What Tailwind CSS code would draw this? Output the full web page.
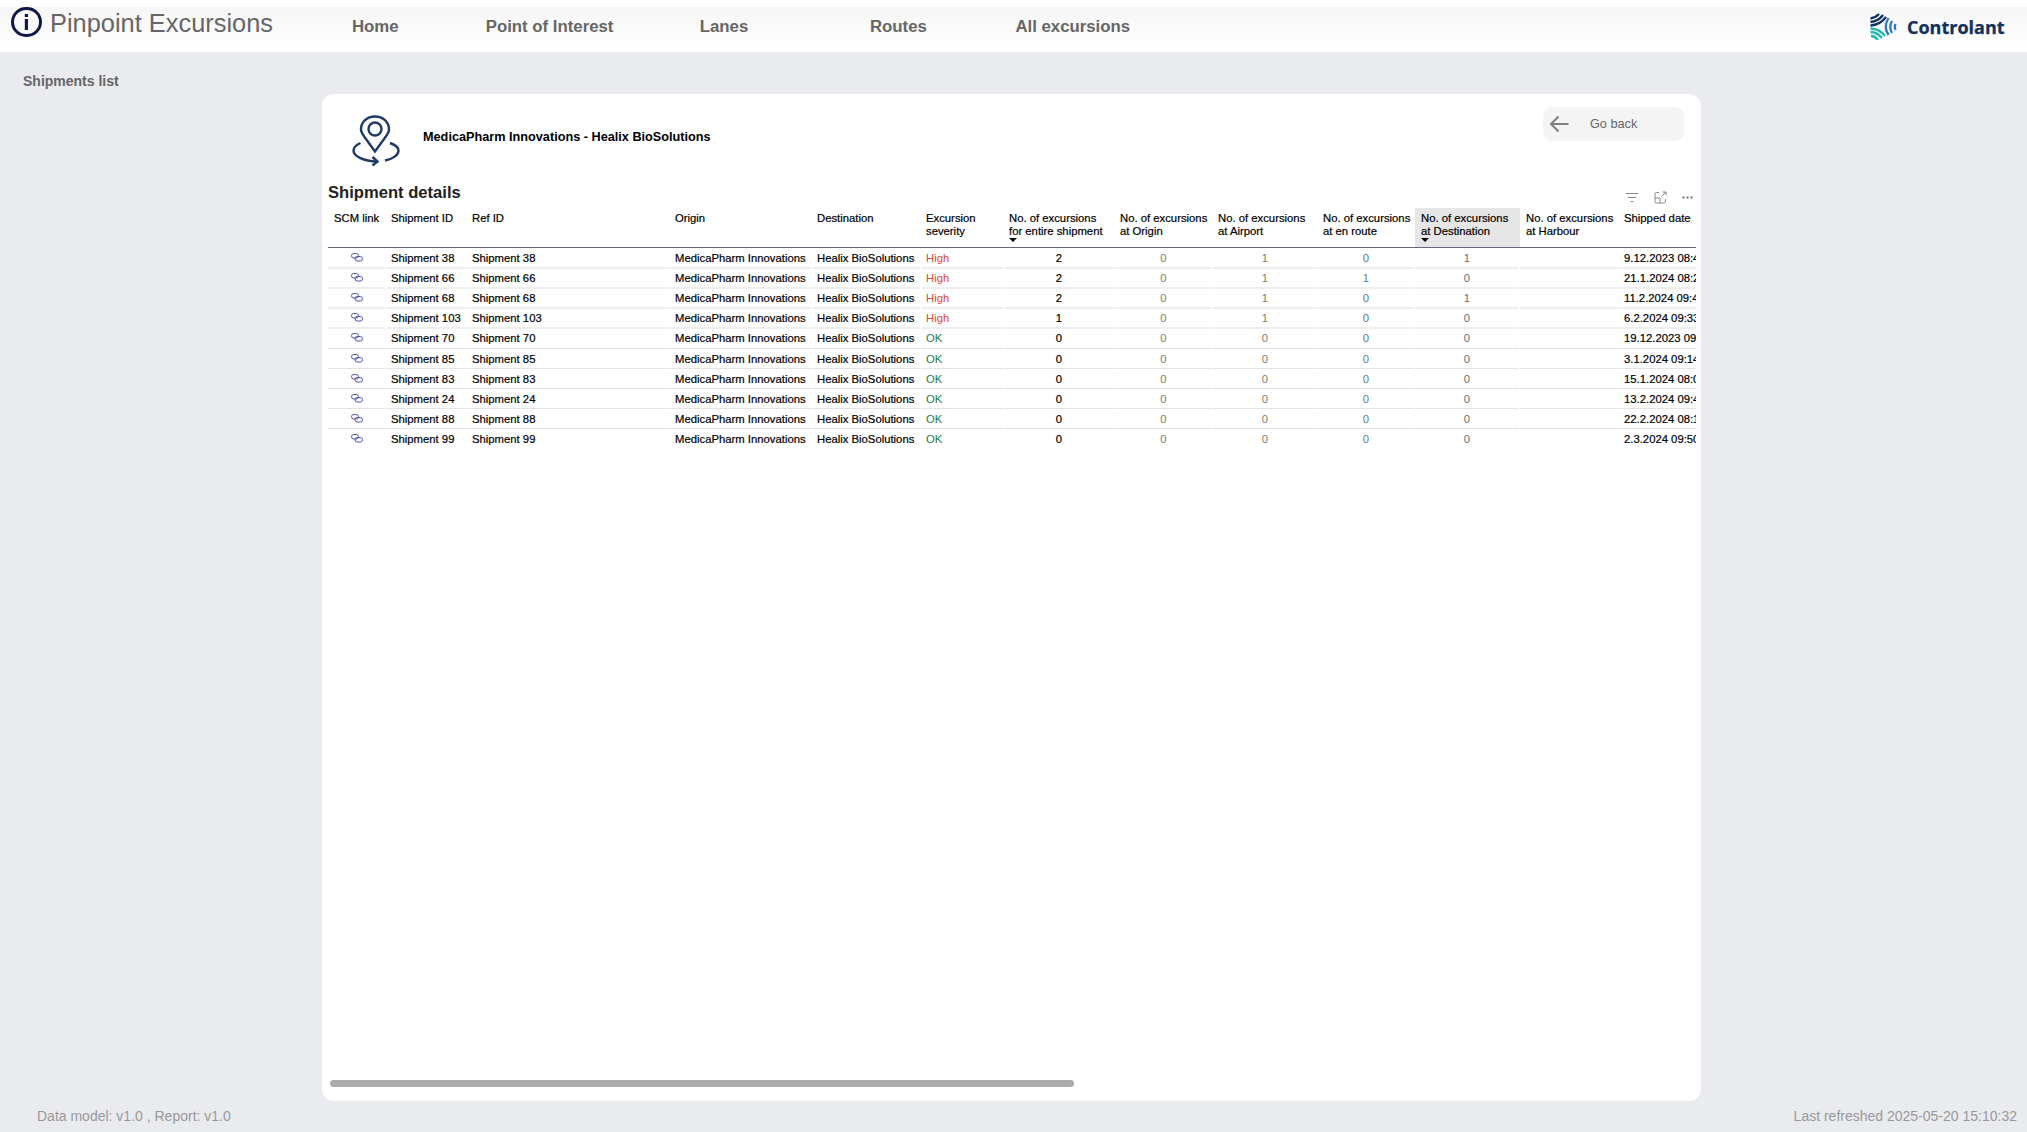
<!DOCTYPE html>
<html><head><meta charset="utf-8"><title>Pinpoint Excursions</title>
<script src="https://cdn.jsdelivr.net/npm/@tailwindcss/browser@4"></script>
</head>
<body class="m-0 w-[2027px] h-[1132px] overflow-hidden bg-[#e9ebef] font-['Liberation_Sans',Arial,sans-serif] flex flex-col">
<div class="h-[7px] shrink-0 bg-white"></div>
<header class="relative h-[45px] shrink-0 bg-gradient-to-b from-[#f6f6f6] to-white flex items-start">
  <div class="w-[31px] h-[30px] ml-[11px] rounded-full border-[3px] border-[#10184a] flex items-center justify-center">
    <svg width="7" height="16" viewBox="0 0 7 16"><rect x="1.8" y="0" width="3.2" height="3" fill="#10184a"/><rect x="1.8" y="5" width="3.2" height="11" fill="#10184a"/></svg>
  </div>
  <div class="ml-[8px] text-[25.4px] leading-[28px] mt-[2px] text-[#666]">Pinpoint Excursions</div>
  <nav class="absolute left-[288px] top-[11px] flex text-[16.8px] leading-[18px] font-bold text-[#666]">
    <a class="w-[174.4px] text-center">Home</a><a class="w-[174.4px] text-center">Point of Interest</a><a class="w-[174.4px] text-center">Lanes</a><a class="w-[174.4px] text-center">Routes</a><a class="w-[174.4px] text-center">All excursions</a>
  </nav>
  <div class="absolute left-[1870px] top-[6px] flex items-center">
    <svg width="27" height="27" viewBox="0 0 27 27" fill="none" stroke-width="2.3">
      <path d="M0.500 5.500Q5 5 9 1" stroke="#14305c"/><path d="M0.500 9Q8 8.500 13 2" stroke="#14305c"/><path d="M0.500 12.500Q10 12 16 4" stroke="#14305c"/>
      <path d="M0.500 15.500Q10 16 15 23" stroke="#22b8b0"/><path d="M0.500 19Q7 19 12 25" stroke="#22b8b0"/><path d="M1 23Q5 23 8 27" stroke="#22b8b0"/>
      <path d="M18.500 5Q13 14 18.500 22" stroke="#2b78c5"/><path d="M22 8Q18.500 14 22 20" stroke="#2b78c5"/><path d="M25.500 11Q24 14 25.500 17" stroke="#2b78c5"/>
    </svg>
    <span class="ml-[10px] text-[18px] leading-[22px] font-bold text-[#14305c] [-webkit-text-stroke:0.25px_#14305c] font-['Open_Sans',sans-serif]">Controlant</span>
  </div>
</header>
<main class="flex-1 relative flex">
  <aside class="w-[322px] shrink-0 pl-[23px] pt-[21px] text-[14px] leading-[16px] font-bold text-[#666]">Shipments list</aside>
  <section class="relative mt-[42px] w-[1379px] h-[1007px] rounded-[12px] bg-white">
    <div class="flex items-start h-[76px] relative">
      <svg class="ml-[30px] mt-[21px] shrink-0" width="48" height="52" viewBox="0 0 48 52" fill="none" stroke="#1f3a63" stroke-width="2.4">
        <path d="M23 36.500L12.500 22C10 18.500 9 16 9 14.500C9 7 15 1.500 23 1.500C31 1.500 37 7 37 14.500C37 16 36 18.500 33.500 22Z"/>
        <circle cx="23" cy="14" r="6.500"/>
        <path d="M8.500 28C4 30 1.500 32.500 1.500 35.500C1.500 41.500 12 46 25 46.500"/><path d="M20.500 42L25.500 46.500L20.500 50.500"/>
        <path d="M38 28C43.500 30 46.500 32.500 46.500 35.500C46.500 40 41 44 33 45.500"/>
      </svg>
      <div class="ml-[23px] mt-[35px] text-[12.7px] leading-[16px] font-bold text-black">MedicaPharm Innovations - Healix BioSolutions</div>
      <div class="absolute left-[1221px] top-[13px] w-[141px] h-[34px] rounded-[9px] bg-[#f4f4f5] flex items-center">
        <svg class="ml-[6px]" width="20" height="20" viewBox="0 0 20 20" fill="none" stroke="#7f7f7f" stroke-width="2"><path d="M19.500 10H2M9.500 2.500L2 10L9.500 17.500"/></svg>
        <span class="ml-[21px] mt-[2px] text-[12.7px] text-[#666]">Go back</span>
      </div>
    </div>
    <div class="relative px-[6px] pt-[13px]">
      <h2 class="text-[16.6px] leading-[20px] font-bold text-[#222]">Shipment details</h2>
      <div class="absolute right-[8px] top-[21px] flex items-center">
        <svg width="14" height="12" viewBox="0 0 14 12" fill="none" stroke="#888" stroke-width="1"><path d="M1 1.500H13M3 5.500H11M5.500 9.500H8.500"/></svg>
        <svg class="ml-[15px]" width="13" height="13" viewBox="0 0 13 13" fill="none" stroke="#888" stroke-width="1"><path d="M5 1.500H2.500Q1 1.500 1 3V10.500Q1 12 2.500 12H10Q11.500 12 11.500 10.500V8M1 7H6V12M7.500 5.500L12 1M8.500 1H12V4.500"/></svg>
        <svg class="ml-[15px]" width="11" height="3" viewBox="0 0 11 3" fill="#888"><circle cx="1.500" cy="1.500" r="1.200"/><circle cx="5.500" cy="1.500" r="1.200"/><circle cx="9.500" cy="1.500" r="1.200"/></svg>
      </div>
      <div class="mt-[5px] w-[1368px] overflow-hidden">
        <div class="w-[1400px] grid grid-cols-[58px_81px_203px_142px_109px_83px_111px_98px_105px_97px_105px_99px_109px] text-[11.3px] leading-[13px] text-black [-webkit-text-stroke:0.2px_#000] whitespace-nowrap">
          <div class="col-span-full grid grid-cols-subgrid [&>div]:relative [&>div]:h-[40px] [&>div]:border-b [&>div]:border-[#666680] [&>div]:pl-[5px] [&>div]:pt-[4px]">
            <div><p class="ml-px">SCM link</p></div>
            <div>Shipment ID</div>
            <div>Ref ID</div>
            <div>Origin</div>
            <div>Destination</div>
            <div>Excursion<br>severity</div>
            <div>No. of excursions<br>for entire shipment<span class="absolute left-[5px] top-[30px] w-0 h-0 border-x-[4px] border-t-[4px] border-x-transparent border-t-black"></span></div>
            <div>No. of excursions<br>at Origin</div>
            <div>No. of excursions<br>at Airport</div>
            <div>No. of excursions<br>at en route</div>
            <div class="bg-[#e6e6e6]"><p class="ml-px">No. of excursions<br>at Destination</p><span class="absolute left-[6px] top-[30px] w-0 h-0 border-x-[4px] border-t-[4px] border-x-transparent border-t-black"></span></div>
            <div><p class="ml-px">No. of excursions<br>at Harbour</p></div>
            <div>Shipped date</div>
          </div>

          <div class="col-span-full grid grid-cols-subgrid [&>div]:h-[21px] [&>div]:mr-px [&>div]:px-[5px] [&>div]:pt-[4px] [&>div]:border-b-2 [&>div]:border-[#eeeeee]">
            <div class="flex justify-center"><svg class="mt-px" width="12" height="9" viewBox="0 0 12 9" fill="none" stroke="#4a56b5" stroke-width="1"><rect x="0.500" y="0.500" width="7" height="4.500" rx="2.200"/><rect x="4" y="3.500" width="7.500" height="4.500" rx="2.200"/></svg></div>
            <div>Shipment 38</div><div>Shipment 38</div><div>MedicaPharm Innovations</div><div>Healix BioSolutions</div><div class="text-[#e2452f] [-webkit-text-stroke:0]">High</div><div class="text-center">2</div><div class="text-center text-[#8a7a66] [-webkit-text-stroke:0]">0</div><div class="text-center text-[#8a7a66] [-webkit-text-stroke:0]">1</div><div class="text-center text-[#5f7a96] [-webkit-text-stroke:0]">0</div><div class="text-center text-[#66706e] [-webkit-text-stroke:0]">1</div><div></div><div>9.12.2023 08:45</div>
          </div>
          <div class="col-span-full grid grid-cols-subgrid [&>div]:h-[20px] [&>div]:mr-px [&>div]:px-[5px] [&>div]:pt-[3px] [&>div]:border-b-2 [&>div]:border-[#eeeeee]">
            <div class="flex justify-center"><svg class="mt-px" width="12" height="9" viewBox="0 0 12 9" fill="none" stroke="#4a56b5" stroke-width="1"><rect x="0.500" y="0.500" width="7" height="4.500" rx="2.200"/><rect x="4" y="3.500" width="7.500" height="4.500" rx="2.200"/></svg></div>
            <div>Shipment 66</div><div>Shipment 66</div><div>MedicaPharm Innovations</div><div>Healix BioSolutions</div><div class="text-[#e2452f] [-webkit-text-stroke:0]">High</div><div class="text-center">2</div><div class="text-center text-[#8a7a66] [-webkit-text-stroke:0]">0</div><div class="text-center text-[#8a7a66] [-webkit-text-stroke:0]">1</div><div class="text-center text-[#5f7a96] [-webkit-text-stroke:0]">1</div><div class="text-center text-[#66706e] [-webkit-text-stroke:0]">0</div><div></div><div>21.1.2024 08:20</div>
          </div>
          <div class="col-span-full grid grid-cols-subgrid [&>div]:h-[20px] [&>div]:mr-px [&>div]:px-[5px] [&>div]:pt-[3px] [&>div]:border-b-2 [&>div]:border-[#eeeeee]">
            <div class="flex justify-center"><svg class="mt-px" width="12" height="9" viewBox="0 0 12 9" fill="none" stroke="#4a56b5" stroke-width="1"><rect x="0.500" y="0.500" width="7" height="4.500" rx="2.200"/><rect x="4" y="3.500" width="7.500" height="4.500" rx="2.200"/></svg></div>
            <div>Shipment 68</div><div>Shipment 68</div><div>MedicaPharm Innovations</div><div>Healix BioSolutions</div><div class="text-[#e2452f] [-webkit-text-stroke:0]">High</div><div class="text-center">2</div><div class="text-center text-[#8a7a66] [-webkit-text-stroke:0]">0</div><div class="text-center text-[#8a7a66] [-webkit-text-stroke:0]">1</div><div class="text-center text-[#5f7a96] [-webkit-text-stroke:0]">0</div><div class="text-center text-[#66706e] [-webkit-text-stroke:0]">1</div><div></div><div>11.2.2024 09:40</div>
          </div>
          <div class="col-span-full grid grid-cols-subgrid [&>div]:h-[20px] [&>div]:mr-px [&>div]:px-[5px] [&>div]:pt-[3px] [&>div]:border-b-2 [&>div]:border-[#eeeeee]">
            <div class="flex justify-center"><svg class="mt-px" width="12" height="9" viewBox="0 0 12 9" fill="none" stroke="#4a56b5" stroke-width="1"><rect x="0.500" y="0.500" width="7" height="4.500" rx="2.200"/><rect x="4" y="3.500" width="7.500" height="4.500" rx="2.200"/></svg></div>
            <div>Shipment 103</div><div>Shipment 103</div><div>MedicaPharm Innovations</div><div>Healix BioSolutions</div><div class="text-[#e2452f] [-webkit-text-stroke:0]">High</div><div class="text-center">1</div><div class="text-center text-[#8a7a66] [-webkit-text-stroke:0]">0</div><div class="text-center text-[#8a7a66] [-webkit-text-stroke:0]">1</div><div class="text-center text-[#5f7a96] [-webkit-text-stroke:0]">0</div><div class="text-center text-[#66706e] [-webkit-text-stroke:0]">0</div><div></div><div>6.2.2024 09:33</div>
          </div>
          <div class="col-span-full grid grid-cols-subgrid [&>div]:h-[20px] [&>div]:mr-px [&>div]:px-[5px] [&>div]:pt-[3px] [&>div]:border-b [&>div]:border-[#e3e3e3]">
            <div class="flex justify-center"><svg class="mt-px" width="12" height="9" viewBox="0 0 12 9" fill="none" stroke="#4a56b5" stroke-width="1"><rect x="0.500" y="0.500" width="7" height="4.500" rx="2.200"/><rect x="4" y="3.500" width="7.500" height="4.500" rx="2.200"/></svg></div>
            <div>Shipment 70</div><div>Shipment 70</div><div>MedicaPharm Innovations</div><div>Healix BioSolutions</div><div class="text-[#1f7a46] [-webkit-text-stroke:0]">OK</div><div class="text-center">0</div><div class="text-center text-[#8a7a66] [-webkit-text-stroke:0]">0</div><div class="text-center text-[#8a7a66] [-webkit-text-stroke:0]">0</div><div class="text-center text-[#5f7a96] [-webkit-text-stroke:0]">0</div><div class="text-center text-[#66706e] [-webkit-text-stroke:0]">0</div><div></div><div>19.12.2023 09:20</div>
          </div>
          <div class="col-span-full grid grid-cols-subgrid [&>div]:h-[20px] [&>div]:mr-px [&>div]:px-[5px] [&>div]:pt-[4px] [&>div]:border-b [&>div]:border-[#e3e3e3]">
            <div class="flex justify-center"><svg class="mt-px" width="12" height="9" viewBox="0 0 12 9" fill="none" stroke="#4a56b5" stroke-width="1"><rect x="0.500" y="0.500" width="7" height="4.500" rx="2.200"/><rect x="4" y="3.500" width="7.500" height="4.500" rx="2.200"/></svg></div>
            <div>Shipment 85</div><div>Shipment 85</div><div>MedicaPharm Innovations</div><div>Healix BioSolutions</div><div class="text-[#1f7a46] [-webkit-text-stroke:0]">OK</div><div class="text-center">0</div><div class="text-center text-[#8a7a66] [-webkit-text-stroke:0]">0</div><div class="text-center text-[#8a7a66] [-webkit-text-stroke:0]">0</div><div class="text-center text-[#5f7a96] [-webkit-text-stroke:0]">0</div><div class="text-center text-[#66706e] [-webkit-text-stroke:0]">0</div><div></div><div>3.1.2024 09:14</div>
          </div>
          <div class="col-span-full grid grid-cols-subgrid [&>div]:h-[20px] [&>div]:mr-px [&>div]:px-[5px] [&>div]:pt-[4px] [&>div]:border-b [&>div]:border-[#e3e3e3]">
            <div class="flex justify-center"><svg class="mt-px" width="12" height="9" viewBox="0 0 12 9" fill="none" stroke="#4a56b5" stroke-width="1"><rect x="0.500" y="0.500" width="7" height="4.500" rx="2.200"/><rect x="4" y="3.500" width="7.500" height="4.500" rx="2.200"/></svg></div>
            <div>Shipment 83</div><div>Shipment 83</div><div>MedicaPharm Innovations</div><div>Healix BioSolutions</div><div class="text-[#1f7a46] [-webkit-text-stroke:0]">OK</div><div class="text-center">0</div><div class="text-center text-[#8a7a66] [-webkit-text-stroke:0]">0</div><div class="text-center text-[#8a7a66] [-webkit-text-stroke:0]">0</div><div class="text-center text-[#5f7a96] [-webkit-text-stroke:0]">0</div><div class="text-center text-[#66706e] [-webkit-text-stroke:0]">0</div><div></div><div>15.1.2024 08:05</div>
          </div>
          <div class="col-span-full grid grid-cols-subgrid [&>div]:h-[20px] [&>div]:mr-px [&>div]:px-[5px] [&>div]:pt-[4px] [&>div]:border-b [&>div]:border-[#e3e3e3]">
            <div class="flex justify-center"><svg class="mt-px" width="12" height="9" viewBox="0 0 12 9" fill="none" stroke="#4a56b5" stroke-width="1"><rect x="0.500" y="0.500" width="7" height="4.500" rx="2.200"/><rect x="4" y="3.500" width="7.500" height="4.500" rx="2.200"/></svg></div>
            <div>Shipment 24</div><div>Shipment 24</div><div>MedicaPharm Innovations</div><div>Healix BioSolutions</div><div class="text-[#1f7a46] [-webkit-text-stroke:0]">OK</div><div class="text-center">0</div><div class="text-center text-[#8a7a66] [-webkit-text-stroke:0]">0</div><div class="text-center text-[#8a7a66] [-webkit-text-stroke:0]">0</div><div class="text-center text-[#5f7a96] [-webkit-text-stroke:0]">0</div><div class="text-center text-[#66706e] [-webkit-text-stroke:0]">0</div><div></div><div>13.2.2024 09:40</div>
          </div>
          <div class="col-span-full grid grid-cols-subgrid [&>div]:h-[20px] [&>div]:mr-px [&>div]:px-[5px] [&>div]:pt-[4px] [&>div]:border-b [&>div]:border-[#e3e3e3]">
            <div class="flex justify-center"><svg class="mt-px" width="12" height="9" viewBox="0 0 12 9" fill="none" stroke="#4a56b5" stroke-width="1"><rect x="0.500" y="0.500" width="7" height="4.500" rx="2.200"/><rect x="4" y="3.500" width="7.500" height="4.500" rx="2.200"/></svg></div>
            <div>Shipment 88</div><div>Shipment 88</div><div>MedicaPharm Innovations</div><div>Healix BioSolutions</div><div class="text-[#1f7a46] [-webkit-text-stroke:0]">OK</div><div class="text-center">0</div><div class="text-center text-[#8a7a66] [-webkit-text-stroke:0]">0</div><div class="text-center text-[#8a7a66] [-webkit-text-stroke:0]">0</div><div class="text-center text-[#5f7a96] [-webkit-text-stroke:0]">0</div><div class="text-center text-[#66706e] [-webkit-text-stroke:0]">0</div><div></div><div>22.2.2024 08:10</div>
          </div>
          <div class="col-span-full grid grid-cols-subgrid [&>div]:h-[20px] [&>div]:mr-px [&>div]:px-[5px] [&>div]:pt-[4px]">
            <div class="flex justify-center"><svg class="mt-px" width="12" height="9" viewBox="0 0 12 9" fill="none" stroke="#4a56b5" stroke-width="1"><rect x="0.500" y="0.500" width="7" height="4.500" rx="2.200"/><rect x="4" y="3.500" width="7.500" height="4.500" rx="2.200"/></svg></div>
            <div>Shipment 99</div><div>Shipment 99</div><div>MedicaPharm Innovations</div><div>Healix BioSolutions</div><div class="text-[#1f7a46] [-webkit-text-stroke:0]">OK</div><div class="text-center">0</div><div class="text-center text-[#8a7a66] [-webkit-text-stroke:0]">0</div><div class="text-center text-[#8a7a66] [-webkit-text-stroke:0]">0</div><div class="text-center text-[#5f7a96] [-webkit-text-stroke:0]">0</div><div class="text-center text-[#66706e] [-webkit-text-stroke:0]">0</div><div></div><div>2.3.2024 09:50</div>
          </div>
        </div>
      </div>
    </div>
    <div class="absolute left-[8px] top-[986px] w-[744px] h-[7px] rounded-full bg-[#acaba9]"></div>
  </section>
  <div class="absolute left-[37px] top-[1056px] text-[14px] leading-[16px] text-[#999]">Data model: v1.0 , Report: v1.0</div>
  <div class="absolute right-[10px] top-[1056px] text-[14px] leading-[16px] text-[#999]">Last refreshed 2025-05-20 15:10:32</div>
</main>
</body></html>
